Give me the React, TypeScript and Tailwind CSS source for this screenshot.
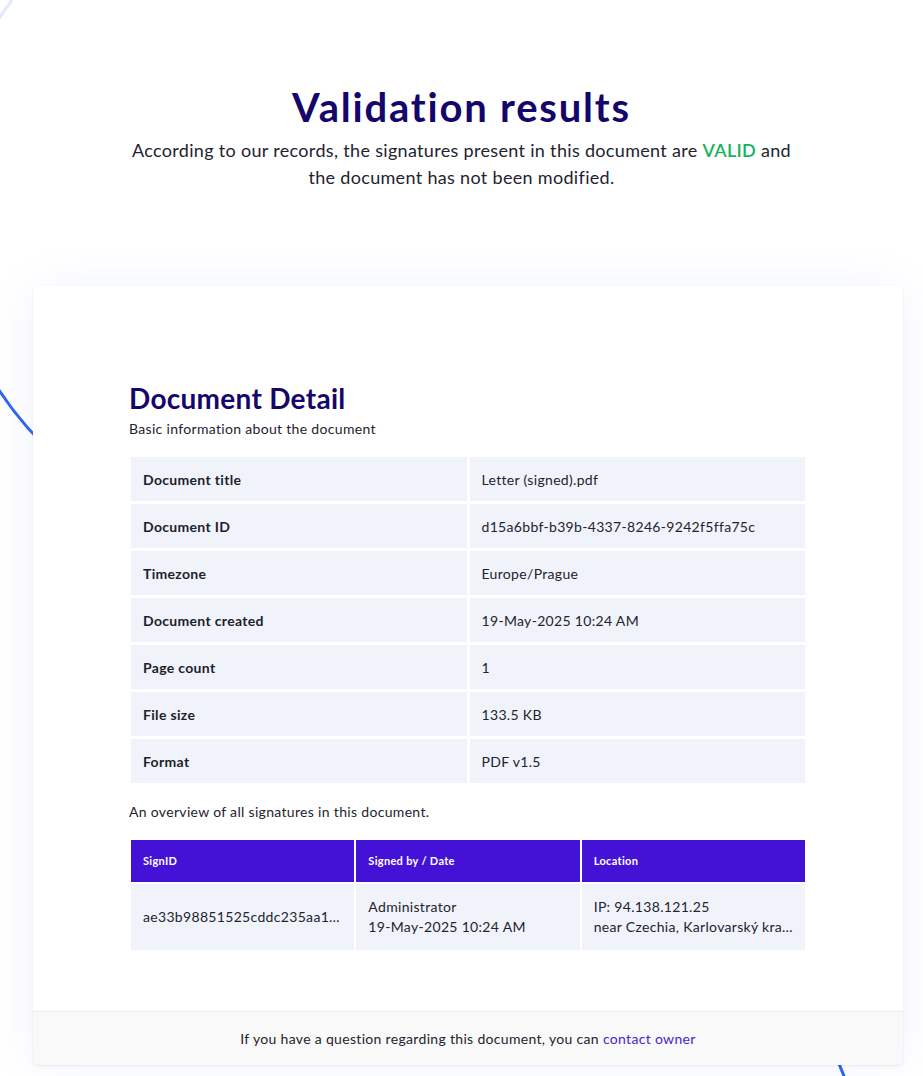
const details = [
  { label: "Document title", value: "Letter (signed).pdf" },
  { label: "Document ID", value: "d15a6bbf-b39b-4337-8246-9242f5ffa75c" },
  { label: "Timezone", value: "Europe/Prague" },
  { label: "Document created", value: "19-May-2025 10:24 AM" },
  { label: "Page count", value: "1" },
  { label: "File size", value: "133.5 KB" },
  { label: "Format", value: "PDF v1.5" },
];

const body = "font-['Lato','Noto_Sans',sans-serif] tracking-[0.02em]";
const head = "font-['Lato','Noto_Sans',sans-serif]";

function Arcs() {
  return (
    <svg
      className="pointer-events-none absolute left-0 top-0"
      width="923"
      height="1076"
      viewBox="0 0 923 1076"
      fill="none"
    >
      <defs>
        <linearGradient id="arcFade" x1="0" y1="0" x2="0" y2="460" gradientUnits="userSpaceOnUse">
          <stop offset="0" stopColor="#e6ebfc" />
          <stop offset="0.6" stopColor="#9fb6f5" />
          <stop offset="0.85" stopColor="#2f66ec" />
          <stop offset="1" stopColor="#2f66ec" />
        </linearGradient>
      </defs>
      <path d="M12 0 A339 339 0 0 0 60 460" stroke="url(#arcFade)" strokeWidth="3" />
      <path d="M826 1030 Q836 1058 850 1090" stroke="#2f66ec" strokeWidth="3" />
    </svg>
  );
}

export default function App() {
  return (
    <div className={`relative min-h-[1076px] overflow-hidden bg-white ${body}`}>
      <Arcs />

      {/* header */}
      <div className="relative pt-[83px] text-center">
        <h1 className={`${head} text-[40px] font-bold leading-[48px] tracking-[0.045em] text-[#14066a]`}>
          Validation results
        </h1>
        <p className="mx-auto mt-[6px] max-w-[680px] text-[18px] leading-[27px] text-[#23232f]">
          According to our records, the signatures present in this document are{" "}
          <span className="font-semibold text-[#14b45d]">VALID</span> and the document has not been
          modified.
        </p>
      </div>

      {/* card */}
      <div className="relative ml-[33px] mr-[20px] mt-[95px] overflow-hidden rounded-[6px] bg-white shadow-[0_0_50px_rgba(70,100,230,0.07),0_1px_3px_rgba(0,0,0,0.08)]">
        <div className="pb-[61px] pl-[96px] pr-[98px] pt-[95px]">
          <h2 className={`${head} text-[28px] font-bold leading-[34px] tracking-[0.01em] text-[#14066a]`}>
            Document Detail
          </h2>
          <p className="mt-[5px] text-[14px] leading-[18px] text-[#23232f]">
            Basic information about the document
          </p>

          <div className="mt-[19px] flex flex-col gap-[3px] pl-[2px]">
            {details.map((row) => (
              <div key={row.label} className="grid grid-cols-2 gap-[3px]">
                <div className="flex h-[44px] items-center bg-[#f0f3fa] px-[12px] text-[14px] font-bold text-[#1e1e2c]">
                  {row.label}
                </div>
                <div className="flex h-[44px] items-center bg-[#f0f3fa] px-[12px] text-[14px] text-[#23232f]">
                  {row.value}
                </div>
              </div>
            ))}
          </div>

          <p className="mt-[19px] text-[14px] leading-[20px] text-[#23232f]">
            An overview of all signatures in this document.
          </p>

          <div className="mt-[18px] flex flex-col gap-[2px] pl-[2px]">
            <div className="grid grid-cols-3 gap-[2px]">
              {["SignID", "Signed by / Date", "Location"].map((h) => (
                <div
                  key={h}
                  className="flex h-[42px] items-center bg-[#4312d6] px-[12px] text-[11px] font-bold text-white"
                >
                  {h}
                </div>
              ))}
            </div>
            <div className="grid grid-cols-3 gap-[2px] text-[14px] leading-[20px] text-[#23232f]">
              <div className="flex h-[66px] min-w-0 items-center bg-[#f0f3fa] px-[12px]">
                <span className="truncate">ae33b98851525cddc235aa1b7c4e0f</span>
              </div>
              <div className="flex h-[66px] flex-col justify-center bg-[#f0f3fa] px-[12px]">
                <span>Administrator</span>
                <span>19-May-2025 10:24 AM</span>
              </div>
              <div className="flex h-[66px] min-w-0 flex-col justify-center bg-[#f0f3fa] px-[12px]">
                <span>IP: 94.138.121.25</span>
                <span className="truncate">near Czechia, Karlovarský kraj, Karlovy Vary</span>
              </div>
            </div>
          </div>
        </div>

        <div className="flex h-[54px] items-center justify-center border-t border-[#ececec] bg-[#f9f9f9] text-[14px] text-[#23232f]">
          If you have a question regarding this document, you can&nbsp;
          <span className="text-[#4a22d6]">contact owner</span>
        </div>
      </div>
    </div>
  );
}
